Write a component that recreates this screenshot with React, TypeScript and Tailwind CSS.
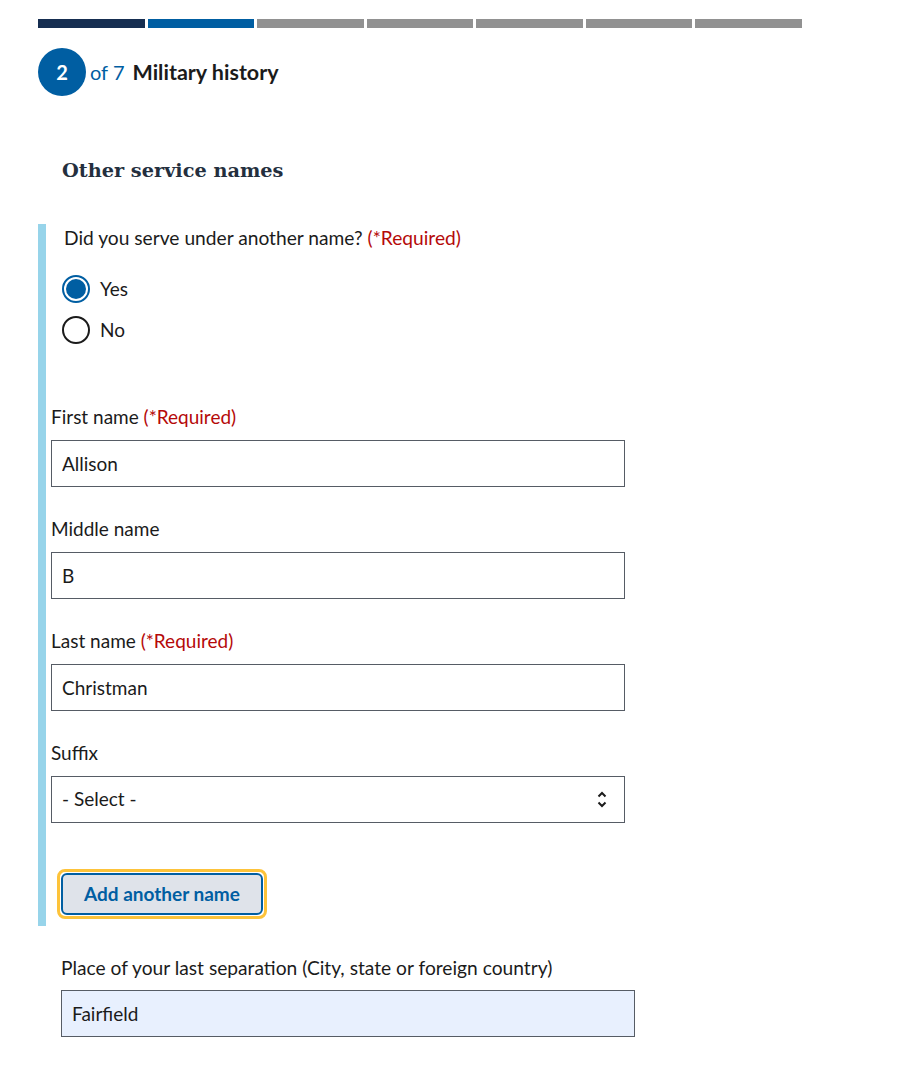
const font = { fontFamily: '"Lato", "Liberation Sans", sans-serif' };

const steps = ["done", "current", "todo", "todo", "todo", "todo", "todo"];

const Required = () => <span className="text-[#b50909]"> (*Required)</span>;

const TextField = ({ label, value, required }: { label: string; value: string; required?: boolean }) => (
  <div className="mt-[30px] first:mt-0">
    <label className="block text-[19px] leading-[24px] text-[#1b1b1b]">
      {label}
      {required && <Required />}
    </label>
    <input
      readOnly
      value={value}
      className="mt-[11px] block h-[47px] w-[574px] border border-[#565c65] bg-white px-[10px] text-[19px] text-[#1b1b1b] outline-none"
      style={font}
    />
  </div>
);

const Radio = ({ label, checked }: { label: string; checked?: boolean }) => (
  <div className="flex h-[41px] items-center gap-[10px]">
    {checked ? (
      <span className="flex h-[28px] w-[28px] items-center justify-center rounded-full border-2 border-[#005ea2] bg-white">
        <span className="h-[20px] w-[20px] rounded-full bg-[#005ea2]" />
      </span>
    ) : (
      <span className="h-[28px] w-[28px] rounded-full border-2 border-[#1b1b1b] bg-white" />
    )}
    <span className="text-[19px] text-[#1b1b1b]">{label}</span>
  </div>
);

export default function App() {
  return (
    <div className="min-h-[1086px] bg-white pl-[38px] pt-[19px]" style={font}>
      <div className="flex w-[764px] gap-[3px]">
        {steps.map((s, i) => (
          <div
            key={i}
            className={
              s === "done"
                ? "h-[9px] flex-1 bg-[#162e51]"
                : s === "current"
                ? "h-[9px] flex-1 bg-[#005ea2]"
                : "h-[9px] flex-1 bg-[#919191]"
            }
          />
        ))}
      </div>

      <div className="mt-[20px] flex items-center">
        <span className="flex h-[48px] w-[48px] items-center justify-center rounded-full bg-[#005ea2] text-[20px] font-bold text-white">
          2
        </span>
        <span className="ml-[4px] text-[20px] text-[#005ea2]">of 7</span>
        <span className="ml-[8px] text-[21.5px] font-bold text-[#1b1b1b]">Military history</span>
      </div>

      <h2
        className="ml-[24px] mt-[61px] text-[19.3px] font-bold text-[#242f3e]"
        style={{ fontFamily: '"DejaVu Serif", "Liberation Serif", serif' }}
      >
        Other service names
      </h2>

      <div className="mt-[38px] w-[620px] border-l-[8px] border-[#97d4ea] pb-[7px] pl-[5px]">
        <div className="pl-[13px] pt-[2px] text-[19.2px] leading-[24px] text-[#1b1b1b]">
          Did you serve under another name?
          <Required />
        </div>
        <div className="mt-[19px] pl-[11px]">
          <Radio label="Yes" checked />
          <Radio label="No" />
        </div>

        <div className="mt-[54px]">
          <TextField label="First name" value="Allison" required />
          <TextField label="Middle name" value="B" />
          <TextField label="Last name" value="Christman" required />
          <div className="mt-[30px]">
            <label className="block text-[19px] leading-[24px] text-[#1b1b1b]">Suffix</label>
            <div className="relative mt-[11px] w-[574px]">
              <select
                className="block h-[47px] w-full appearance-none border border-[#565c65] bg-white px-[10px] text-[19px] text-[#1b1b1b] outline-none"
                style={font}
              >
                <option>- Select -</option>
              </select>
              <svg
                className="pointer-events-none absolute right-[18px] top-[15px]"
                width="10"
                height="17"
                viewBox="0 0 10 17"
                fill="none"
                stroke="#1b1b1b"
                strokeWidth="2"
              >
                <path d="M1.5 5.5 L5 2 L8.5 5.5" />
                <path d="M1.5 11.5 L5 15 L8.5 11.5" />
              </svg>
            </div>
          </div>
        </div>

        <div className="ml-[6px] mt-[46px] inline-block rounded-[8px] border-[3px] border-[#fdc33a] p-[1px]">
          <button className="block h-[42px] rounded-[6px] border-2 border-[#005ea2] bg-[#dfe3ea] px-[21px] text-[19px] font-bold text-[#005ea2]">
            Add another name
          </button>
        </div>
      </div>

      <div className="ml-[23px] mt-[30px]">
        <label className="block text-[19.2px] leading-[24px] text-[#1b1b1b]">
          Place of your last separation (City, state or foreign country)
        </label>
        <input
          readOnly
          value="Fairfield"
          className="mt-[10px] block h-[47px] w-[574px] border border-[#565c65] bg-[#e8f0fe] px-[10px] text-[19px] text-[#1b1b1b] outline-none"
          style={font}
        />
      </div>
    </div>
  );
}
